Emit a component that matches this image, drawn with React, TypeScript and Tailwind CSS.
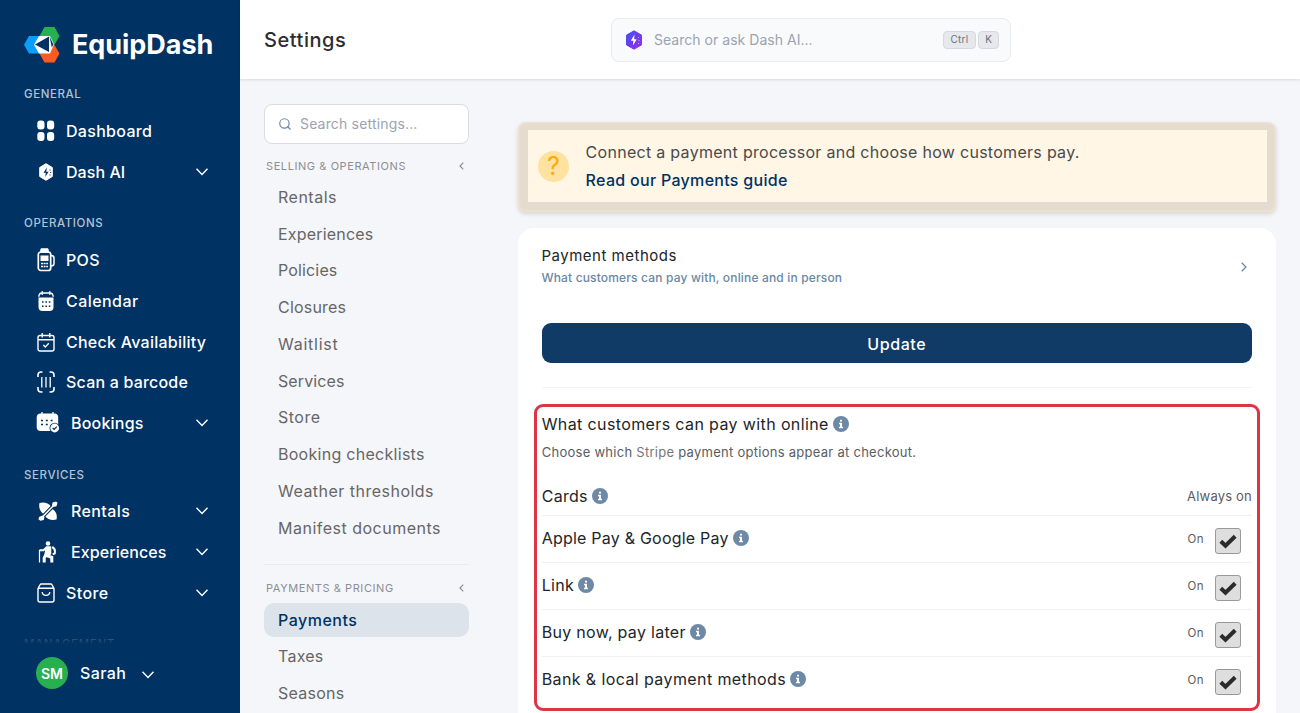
import type { ReactNode } from "react"
import { Search } from "lucide-react"

type NavItem = {
  label: string
  icon: ReactNode
  textClass: string
  wide?: boolean
  expandable?: boolean
}

function Logo() {
  return (
    <svg width="36" height="36" viewBox="0 0 36 36">
      <path d="M20.500 0h10l5 9-5 8.700h-10l-5-8.700z" fill="#27b050" />
      <path d="M20.500 18h10l5 8.500-5 9h-10l-5-9z" fill="#fb5a23" />
      <path d="M5 9h16l5 8.500-5 9H5L0 17.800z" fill="#0c9eff" />
      <path d="M15 9h11l4 8.500-4 9H15l-5-8.700z" fill="#fff" />
      <path d="M11 17.600 25 9.500v15.500z" fill="#003263" />
      <path d="M26 11l2.800 6.500L26 24z" fill="#fff" />
      <path d="M25.500 9.200 29.300 17.500 27.800 20.500z" fill="#003263" />
    </svg>
  )
}

function DashboardIcon() {
  return (
    <svg width="18" height="22" viewBox="0 0 18 22" fill="currentColor">
      <rect x="0.300" y="0.500" width="7.200" height="9" rx="3" />
      <rect x="10" y="0.500" width="7.200" height="9" rx="3" />
      <rect x="0.300" y="12" width="7.200" height="9" rx="3" />
      <rect x="10" y="12" width="7.200" height="9" rx="3" />
    </svg>
  )
}

function DashAiIcon() {
  return (
    <svg width="18" height="20" viewBox="0 0 18 20">
      <path d="M9 1.700l6.300 3.800v9L9 18.300l-6.300-3.800v-9z" fill="#fff" stroke="#fff" strokeLinejoin="round" />
      <path d="M9.800 5.500 6.500 10.800h2.300L8.300 15l3.300-5.300H9.300z" fill="#003263" />
      <path d="M12.500 8h1M13.200 10.500h1M12.500 13h1" stroke="#003263" />
    </svg>
  )
}

function PosIcon() {
  return (
    <svg width="18" height="24" viewBox="0 0 18 24" fill="none" stroke="currentColor">
      <rect x="1.300" y="4" width="12.400" height="18.500" rx="2.500" strokeWidth="1.700" />
      <path d="M3.500 4.500 4 .8h7l.5 3.700z" fill="currentColor" />
      <rect x="4" y="8" width="7" height="4.500" fill="currentColor" />
      <path d="M4 15.500h7M4 18.500h7" strokeWidth="1.300" strokeDasharray="2 .6" />
      <path d="M14 7.500c2 0 3 .8 3 2.500v5.500c0 1.500-1 2.500-3 2.500" strokeWidth="1.500" />
    </svg>
  )
}

function CalendarIcon() {
  return (
    <svg width="18" height="22" viewBox="0 0 18 22" fill="none">
      <path d="M1.800 6.800C2 4 3 3 5 3h8c2 0 3 1 3.200 3.800" stroke="#fff" strokeWidth="1.400" />
      <path d="M5.200 1v4M12.800 1v4" stroke="#fff" strokeWidth="1.200" />
      <path d="M1.500 7.500h15V17c0 2.800-1.300 4-4 4h-7c-2.700 0-4-1.200-4-4z" fill="#fff" />
      <path d="M5 12h8.500M5 16.300h8.500" stroke="#003263" strokeWidth="1.600" strokeDasharray="1.600 1.800" />
    </svg>
  )
}

function CheckCalendarIcon() {
  return (
    <svg width="18" height="20" viewBox="0 0 18 20" fill="none" stroke="currentColor" strokeWidth="1.400">
      <rect x="1" y="3.500" width="16" height="15.500" rx="2" />
      <path d="M1 7.800h16M5.200 1v4.500M12.800 1v4.500M6.300 13l2 2 3.500-3.700" />
    </svg>
  )
}

function BarcodeIcon() {
  return (
    <svg width="18" height="22" viewBox="0 0 18 22" fill="none" stroke="currentColor" strokeWidth="1.600">
      <path d="M1 6V4c0-2 .8-3 3-3h1.500M12.500 1H14c2.200 0 3 1 3 3v2M1 16v2c0 2 .8 3 3 3h1.500M12.500 21H14c2.200 0 3-1 3-3v-2" />
      <path d="M4.800 6v10.500M9 6v10.500M13.200 6v10.500" strokeWidth="1.300" />
    </svg>
  )
}

function BookingsIcon() {
  return (
    <svg width="24" height="22" viewBox="0 0 24 22" fill="none">
      <path d="M6 0v3M17 0v3" stroke="#fff" strokeWidth="1.300" />
      <rect x="0.700" y="1.500" width="21.500" height="17.500" rx="4" fill="#fff" />
      <path d="M5 8.500h14M5 12.500h9" stroke="#003263" strokeWidth="1.500" strokeDasharray="2 2.800" />
      <circle cx="18.700" cy="16" r="5.200" fill="#003263" />
      <circle cx="18.700" cy="16" r="4.400" fill="#fff" />
      <path d="m16.700 16 1.500 1.500 2.600-2.900" stroke="#003263" strokeWidth="1.200" />
    </svg>
  )
}

function RentalsIcon() {
  return (
    <svg width="20" height="20" viewBox="0 0 20 20" fill="none">
      <path d="M1.500 2C6 .5 10.500 2 13 5.500L5.500 13C2 10.500.5 6.500 1.500 2z" fill="#fff" />
      <path d="M18.500 18.500c-4.500 1.300-9 0-11.500-3.500L14.500 8c3.500 2.500 5 6 4 10.500z" fill="#fff" />
      <path d="M3 17.500 17 3" stroke="#003263" strokeWidth="3.600" />
      <path d="M3 17.500 17 3" stroke="#fff" strokeWidth="1.500" />
      <path d="m14 4.500.5-3L18 .5l1.500 1.300-1 3.500-3 .8zM1 16l3.500-1.500 2 1.500-.8 3-3.200.8L.5 18.500z" fill="#fff" />
    </svg>
  )
}

function HikerIcon() {
  return (
    <svg width="18" height="22" viewBox="0 0 18 22" fill="none" stroke="#fff">
      <circle cx="10" cy="2.500" r="2.300" fill="#fff" stroke="none" />
      <path d="M1.500 9v12.500" strokeWidth="1.200" />
      <path d="M1.500 9.200h4L8.500 6.500" strokeWidth="2" />
      <path d="M8.500 6h4v7l-5.500 1z" fill="#fff" strokeWidth="1.500" strokeLinejoin="round" />
      <path d="M8 13.500 6.200 16.800V21.500M8.500 14.500l5.300 1.800v5.200" strokeWidth="3" />
      <path d="M14.200 6c2 1 3.200 3.500 2.500 6.500l-2 .7" strokeWidth="2" />
    </svg>
  )
}

function StoreIcon() {
  return (
    <svg width="18" height="20" viewBox="0 0 18 20" fill="none" stroke="currentColor" strokeWidth="1.400">
      <path d="M1 5.500 3 1.800C3.300 1.200 3.700 1 4.300 1h9.400c.6 0 1 .2 1.300.8l2 3.700V17c0 1.300-.7 2-2 2H3c-1.300 0-2-.7-2-2zM1 5.300h16M5.200 9c.4 4.500 7.200 4.500 7.600 0" />
    </svg>
  )
}

function ChevronDownIcon() {
  return (
    <svg width="12" height="8" viewBox="0 0 12 8" fill="none" stroke="currentColor" strokeWidth="1.400">
      <path d="M.5.800 6 6.500 11.500.8" />
    </svg>
  )
}

const navSections: { title: string; items: NavItem[] }[] = [
  {
    title: "GENERAL",
    items: [
      { label: "Dashboard", icon: <DashboardIcon />, textClass: "tracking-[0.3px]" },
      { label: "Dash AI", icon: <DashAiIcon />, textClass: "tracking-[0.05px]", expandable: true },
    ],
  },
  {
    title: "OPERATIONS",
    items: [
      { label: "POS", icon: <PosIcon />, textClass: "tracking-[0.3px]" },
      { label: "Calendar", icon: <CalendarIcon />, textClass: "tracking-[0.45px]" },
      { label: "Check Availability", icon: <CheckCalendarIcon />, textClass: "tracking-[0.25px]" },
      { label: "Scan a barcode", icon: <BarcodeIcon />, textClass: "tracking-[0.2px]" },
      { label: "Bookings", icon: <BookingsIcon />, textClass: "tracking-[0.2px]", wide: true, expandable: true },
    ],
  },
  {
    title: "SERVICES",
    items: [
      { label: "Rentals", icon: <RentalsIcon />, textClass: "tracking-[0.4px]", wide: true, expandable: true },
      { label: "Experiences", icon: <HikerIcon />, textClass: "tracking-[0.08px]", wide: true, expandable: true },
      { label: "Store", icon: <StoreIcon />, textClass: "tracking-[0.4px]", expandable: true },
    ],
  },
]

const sellingItems = [
  { label: "Rentals", textClass: "tracking-[0.5px]" },
  { label: "Experiences", textClass: "tracking-[0.2px]" },
  { label: "Policies", textClass: "tracking-[0.15px]" },
  { label: "Closures", textClass: "tracking-[0.2px]" },
  { label: "Waitlist", textClass: "tracking-[0.75px]" },
  { label: "Services", textClass: "tracking-[0.1px]" },
  { label: "Store", textClass: "tracking-[0.5px]" },
  { label: "Booking checklists", textClass: "tracking-[0.28px]" },
  { label: "Weather thresholds", textClass: "tracking-[0.48px]" },
  { label: "Manifest documents", textClass: "tracking-[0.5px]" },
]

const pricingItems = [
  { label: "Payments", textClass: "tracking-[0.5px]", active: true },
  { label: "Taxes", textClass: "tracking-[0.25px]" },
  { label: "Seasons", textClass: "tracking-[0.25px]" },
]

const paymentOptions = [
  { label: "Apple Pay & Google Pay", textClass: "tracking-[0.22px]" },
  { label: "Link", textClass: "tracking-[0.3px]" },
  { label: "Buy now, pay later", textClass: "tracking-[0.3px]" },
  { label: "Bank & local payment methods", textClass: "tracking-[0.4px]" },
]

function Sidebar() {
  return (
    <aside className="flex h-full w-60 shrink-0 flex-col bg-[#003263] text-white">
      <div className="flex h-[84px] shrink-0 items-start gap-3 pt-[27px] pl-6">
        <Logo />
        <span className="text-[27px] leading-9 font-bold tracking-[-0.05px]">EquipDash</span>
      </div>
      <nav className="min-h-0 flex-1">
        {navSections.map((section) => (
          <div key={section.title} className="mb-[21px]">
            <p className="mb-[6.500px] h-5 pl-6 text-[11.500px] leading-5 font-medium tracking-[0.600px] text-[#b3c2d1]">
              {section.title}
            </p>
            {section.items.map((item) => (
              <div key={item.label} className="flex h-[40.800px] items-center pr-8 pl-[37px]">
                <span className={`flex shrink-0 items-center ${item.wide ? "w-[34px]" : "w-[29px]"}`}>
                  <span className={item.wide ? (item.label === "Bookings" ? "-ml-px" : "pl-px") : ""}>{item.icon}</span>
                </span>
                <span className={`flex-1 text-base font-medium whitespace-nowrap ${item.textClass}`}>{item.label}</span>
                {item.expandable ? <ChevronDownIcon /> : null}
              </div>
            ))}
          </div>
        ))}
        {/* next section fades out underneath the profile bar */}
        <p className="h-5 bg-[linear-gradient(to_bottom,#2d557d_25%,#0b3b6a_45%,#003263_50%)] bg-clip-text pl-6 text-[11.500px] leading-5 font-medium tracking-[0.700px] text-transparent">
          MANAGEMENT
        </p>
      </nav>
      <div className="flex h-[56px] shrink-0 items-start pl-9">
        <span className="flex h-8 w-8 items-center justify-center rounded-full bg-[#27b050] pt-px text-sm font-semibold">SM</span>
        <span className="ml-3 text-base leading-8 font-medium tracking-[0.4px]">Sarah</span>
        <span className="mt-[14px] ml-4">
          <ChevronDownIcon />
        </span>
      </div>
    </aside>
  )
}

function TopBar() {
  return (
    <header className="flex h-[79px] shrink-0 items-center bg-white pl-6 shadow-[0_1px_3px_rgba(0,0,0,0.12)]">
      <h1 className="w-[347px] pt-px text-xl font-medium tracking-[0.550px] text-[#2b2d30]">Settings</h1>
      <div className="flex h-11 w-[400px] items-center rounded-lg border border-[#e7eaee] bg-[#f9fafc] pr-[11px] pl-[13px]">
        <svg width="18" height="20" viewBox="0 0 18 20">
          <defs>
            <linearGradient id="dash-ai" x1="0" y1="0" x2="1" y2="1">
              <stop stopColor="#3b5bf5" />
              <stop offset="0.500" stopColor="#7138ee" />
              <stop offset="1" stopColor="#9333ea" />
            </linearGradient>
          </defs>
          <path d="M9 .8l7.500 4.300v9.800L9 19.200l-7.500-4.300V5.100z" fill="url(#dash-ai)" stroke="url(#dash-ai)" strokeLinejoin="round" />
          <path d="M9.500 4.500 5.800 10.800h2.500L8 15.500l3.700-6.300H9.200z" fill="#fff" />
          <path d="M13 7.500h1M13.500 10.500h1M13 13.500h1" stroke="#c9a9ff" />
        </svg>
        <span className="ml-[11px] flex-1 text-sm tracking-[0.03px] text-[#9ca3af]">Search or ask Dash AI...</span>
        <kbd className="flex h-[18px] w-[33px] items-center justify-center rounded border border-[#d6d9de] bg-[#e6e8ec] font-[Inter] text-[10px] tracking-[0.3px] text-[#6b7280]">Ctrl</kbd>
        <kbd className="ml-0.5 flex h-[18px] w-[21px] items-center justify-center rounded border border-[#d6d9de] bg-[#e6e8ec] font-[Inter] text-[10px] text-[#6b7280]">K</kbd>
      </div>
    </header>
  )
}

function GroupHeading({ title }: { title: string }) {
  return (
    <div className="flex h-4 items-center justify-between pr-[5px] pl-0.5 text-[#8b8f94]">
      <span className="text-[11px] tracking-[0.580px]">{title}</span>
      <svg width="5" height="8" viewBox="0 0 5 8" fill="none" stroke="currentColor" strokeWidth="1.200">
        <path d="M4.300.7 1 4l3.300 3.300" />
      </svg>
    </div>
  )
}

function SettingsNav() {
  return (
    <div className="w-[205px] shrink-0">
      <div className="flex h-10 items-center rounded-lg border border-[#d9dce0] bg-white pl-[13px]">
        <Search className="h-[14px] w-[14px] text-[#6b87a3]" />
        <span className="ml-2 text-sm tracking-[0.17px] text-[#9ca3af]">Search settings...</span>
      </div>
      <div className="mt-[14px]">
        <GroupHeading title="SELLING & OPERATIONS" />
      </div>
      <ul className="mt-[4.400px]">
        {sellingItems.map((item) => (
          <li key={item.label} className="flex h-[36.760px] items-center pl-[14px] text-base text-[#666]">
            <span className={item.textClass}>{item.label}</span>
          </li>
        ))}
      </ul>
      <div className="mt-[18px] border-t border-[#e9ebee] pt-[15px]">
        <GroupHeading title="PAYMENTS & PRICING" />
      </div>
      <ul className="mt-[7px] space-y-[2.300px]">
        {pricingItems.map((item) => (
          <li
            key={item.label}
            className={`flex h-[34.500px] items-center rounded-[10px] pb-px pl-[14px] text-base ${item.active ? "bg-[#dce3eb] font-medium text-[#003263]" : "text-[#666]"}`}
          >
            <span className={item.textClass}>{item.label}</span>
          </li>
        ))}
      </ul>
    </div>
  )
}

function InfoIcon() {
  return (
    <svg className="ml-1 shrink-0" width="16" height="16" viewBox="0 0 16 16">
      <circle cx="8" cy="8" r="8" fill="#6d89a6" />
      <path d="M7 3.700h2v1.900H7zM6 6.800h3v4h1v1.400H6v-1.400h1V8.200H6z" fill="#fff" />
    </svg>
  )
}

function GuideBanner() {
  return (
    <div className="rounded-lg bg-[#e5dccf] pt-2 pr-[9.500px] pb-[10px] pl-[9.500px] shadow-[inset_0_0_3px_#fbeedb,0_2px_4px_rgba(120,110,100,0.25)]">
      <div className="flex h-[72px] items-center bg-[#fff6e6] pl-[10.500px]">
        <span className="flex h-[31px] w-[31px] items-center justify-center rounded-full bg-[#fde2a0] text-[25px] leading-none text-[#ffa90a]">?</span>
        <div className="ml-[16.600px] text-base leading-7">
          <p className="tracking-[0.290px] text-[#4a4a4a]">Connect a payment processor and choose how customers pay.</p>
          <p className="font-medium tracking-[0.3px] text-[#003263]">Read our Payments guide</p>
        </div>
      </div>
    </div>
  )
}

function CheckedBox() {
  return (
    <span className="mt-1 mr-[11px] ml-[11px] flex h-[26px] w-[26px] items-center justify-center rounded-[3px] border border-[#999] bg-[#dedede]">
      <svg width="18" height="15" viewBox="0 0 18 15" fill="none" stroke="#2b2b2b" strokeWidth="4">
        <path d="M1.800 7.200 6.500 11.700 16.200 2.200" />
      </svg>
    </span>
  )
}

function OnlinePayments() {
  return (
    <section className="-mx-2 h-[307px] rounded-[9px] border-3 border-[#dc3545] pr-[5px] pl-[5.200px] text-[#212529]">
      <h3 className="flex h-[34px] items-center text-base">
        <span className="tracking-[0.380px]">What customers can pay with online</span>
        <InfoIcon />
      </h3>
      <p className="mt-px h-5 text-[13px] leading-5 tracking-[0.270px] text-[#5a5d62]">
        Choose which <span className="text-[#777]">Stripe</span> payment options appear at checkout.
      </p>
      <div className="mt-[17px] flex h-[37px] items-center justify-between border-b border-[#eff1f3]">
        <span className="flex items-center pb-0.5 text-base">
          <span className="tracking-[0.3px]">Cards</span>
          <InfoIcon />
        </span>
        <span className="text-[13px] tracking-[0.2px] text-[#5a5d62]">Always on</span>
      </div>
      {paymentOptions.map((option) => (
        <div key={option.label} className="flex h-[47px] items-center border-b border-[#eff1f3] last:border-transparent">
          <span className="flex flex-1 items-center pb-0.5 text-base">
            <span className={option.textClass}>{option.label}</span>
            <InfoIcon />
          </span>
          <span className="pt-px text-[11.500px] tracking-[0.4px] text-[#5a5d62]">On</span>
          <CheckedBox />
        </div>
      ))}
    </section>
  )
}

function PaymentsPanel() {
  return (
    <div className="mt-4 h-[520px] rounded-t-2xl bg-white pt-[18px] pr-6 pl-[23.500px]">
      <div className="flex h-[41px] items-center justify-between">
        <div className="pt-px">
          <h2 className="text-[15px] leading-[22px] tracking-[0.5px] text-[#212529]">Payment methods</h2>
          <p className="text-xs leading-[22px] font-medium tracking-[0.160px] text-[#6b87a3]">What customers can pay with, online and in person</p>
        </div>
        <svg className="mr-[5px]" width="6" height="10" viewBox="0 0 6 10" fill="none" stroke="#6b87a3" strokeWidth="1.300">
          <path d="M.7.7 5 5 .7 9.300" />
        </svg>
      </div>
      <button className="mt-9 flex h-10 w-full items-center justify-center rounded-[9px] bg-[#0f3b66] pt-px text-base font-medium tracking-[0.600px] text-white">
        Update
      </button>
      <div className="mt-6 mb-4 border-t border-[#f3f4f6]" />
      <OnlinePayments />
    </div>
  )
}

export default function App() {
  return (
    <div className="flex h-[713px] w-[1300px] overflow-hidden bg-[#f5f6f9] font-[Inter,sans-serif]">
      <Sidebar />
      <div className="flex min-w-0 flex-1 flex-col">
        <TopBar />
        <main className="flex min-h-0 flex-1 overflow-hidden pt-[25px] pr-6 pl-6">
          <SettingsNav />
          <div className="ml-[49px] min-w-0 flex-1 pt-[18px]">
            <GuideBanner />
            <PaymentsPanel />
          </div>
        </main>
      </div>
    </div>
  )
}
